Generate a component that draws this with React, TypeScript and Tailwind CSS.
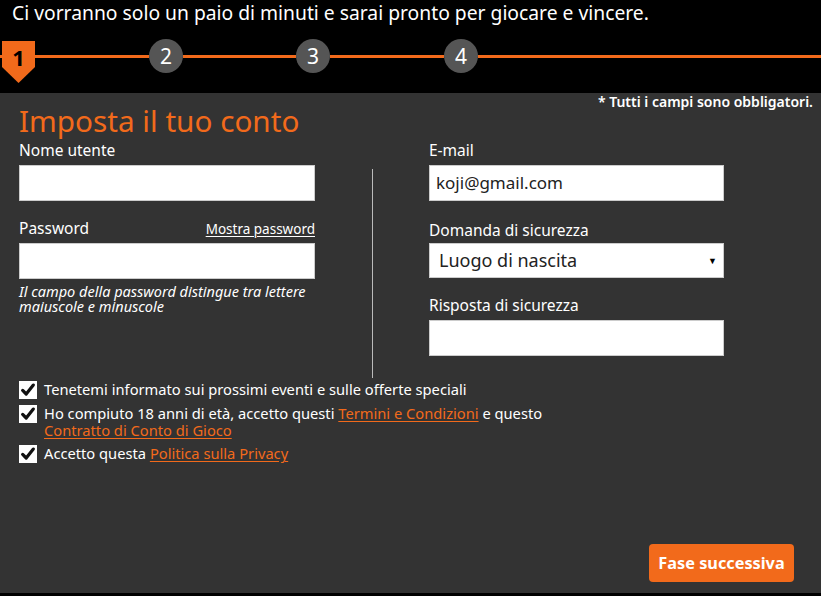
import React from 'react';

const ORANGE = 'text-[#f26a1b]';

const Step: React.FC<{ n: number }> = ({ n }) => (
  <div className="w-[34px] h-[34px] rounded-full bg-[#555555] text-white flex items-center justify-center text-[21px] leading-none">
    {n}
  </div>
);

const Segment: React.FC<{ w?: string }> = ({ w = 'w-[114px]' }) => (
  <div className={`${w} h-[3px] bg-[#f26a1b] mt-[16px]`} />
);

const CheckBox: React.FC = () => (
  <div className="w-[18px] h-[18px] bg-white shrink-0 flex items-center justify-center">
    <svg viewBox="0 0 18 18" className="w-[16px] h-[16px]">
      <path d="M3 9.5 L7 13.5 L15 3.5" fill="none" stroke="#111" strokeWidth="3.6" strokeLinecap="round" strokeLinejoin="round" />
    </svg>
  </div>
);

const Field: React.FC<{ label: string; value?: string; extra?: React.ReactNode }> = ({ label, value, extra }) => (
  <div>
    <div className="flex items-center justify-between h-[20px]">
      <span className="text-[15.5px] text-white">{label}</span>
      {extra}
    </div>
    <div className="mt-[4px] h-[36px] bg-white border border-[#cccccc] flex items-center px-[6px] text-[17px] text-[#222]">
      {value}
    </div>
  </div>
);

const Link: React.FC<{ children: React.ReactNode }> = ({ children }) => (
  <a className={`${ORANGE} underline underline-offset-2`}>{children}</a>
);

export default function App() {
  return (
    <div className="w-[821px] h-[596px] bg-black overflow-hidden font-['Noto_Sans',sans-serif]">
      <div className="h-[39px] px-[12px] pt-[2px] text-[19.3px] leading-[22px] text-white">
        Ci vorranno solo un paio di minuti e sarai pronto per giocare e vincere.
      </div>

      <div className="h-[54px] flex items-start">
        <Segment w="w-[2px]" />
        <div className="mt-[2px] w-[33px] h-[42px] bg-[#f26a1b] [clip-path:polygon(0_0,100%_0,100%_62%,50%_100%,0_62%)] flex justify-center pt-[4px] text-[22px] leading-[24px] font-bold text-black">
          1
        </div>
        <Segment />
        <Step n={2} />
        <Segment w="w-[113px]" />
        <Step n={3} />
        <Segment />
        <Step n={4} />
        <div className="flex-1 h-[3px] bg-[#f26a1b] mt-[16px]" />
      </div>

      <div className="h-[500px] bg-[#333333] pl-[19px] pr-[8px]">
        <div className="flex justify-between items-start">
          <h1 className={`mt-[11px] text-[29.7px] leading-[34px] ${ORANGE}`}>Imposta il tuo conto</h1>
          <span className="mt-[1px] text-[14px] leading-[16px] text-white font-semibold">* Tutti i campi sono obbligatori.</span>
        </div>

        <div className="flex mt-[3px]">
          <div className="w-[296px] space-y-[18px]">
            <Field label="Nome utente" />
            <div>
              <Field
                label="Password"
                extra={<span className="text-[13.5px] text-white underline underline-offset-2">Mostra password</span>}
              />
              <p className="mt-[5px] text-[14.5px] leading-[15px] italic text-white">
                Il campo della password distingue tra lettere maiuscole e minuscole
              </p>
            </div>
          </div>

          <div className="ml-[57px] mt-[28px] w-[1px] h-[209px] bg-[#bbbbbb]" />

          <div className="ml-[56px] w-[295px] space-y-[18px]">
            <Field label="E-mail" value="koji@gmail.com" />
            <div>
              <div className="h-[20px] text-[15.5px] text-white">Domanda di sicurezza</div>
              <div className="mt-[4px] h-[35px] bg-white border border-[#cccccc] flex items-center justify-between pl-[9px] pr-[6px] text-[18px] text-[#222]">
                <span>Luogo di nascita</span>
                <span className="text-[9px] text-black">▼</span>
              </div>
            </div>
            <Field label="Risposta di sicurezza" />
          </div>
        </div>

        <div className="mt-[3px] space-y-[6px] text-[14.7px] leading-[17px] text-white">
          <div className="flex gap-[7px]">
            <CheckBox />
            <span>Tenetemi informato sui prossimi eventi e sulle offerte speciali</span>
          </div>
          <div className="flex gap-[7px]">
            <CheckBox />
            <span>
              Ho compiuto 18 anni di età, accetto questi <Link>Termini e Condizioni</Link> e questo
              <br />
              <Link>Contratto di Conto di Gioco</Link>
            </span>
          </div>
          <div className="flex gap-[7px]">
            <CheckBox />
            <span>
              Accetto questa <Link>Politica sulla Privacy</Link>
            </span>
          </div>
        </div>

        <div className="flex justify-end pr-[19px] mt-[81px]">
          <button className="w-[145px] h-[38px] rounded-[4px] bg-[#f26a1b] text-white font-bold text-[16.3px]">
            Fase successiva
          </button>
        </div>
      </div>
    </div>
  );
}
